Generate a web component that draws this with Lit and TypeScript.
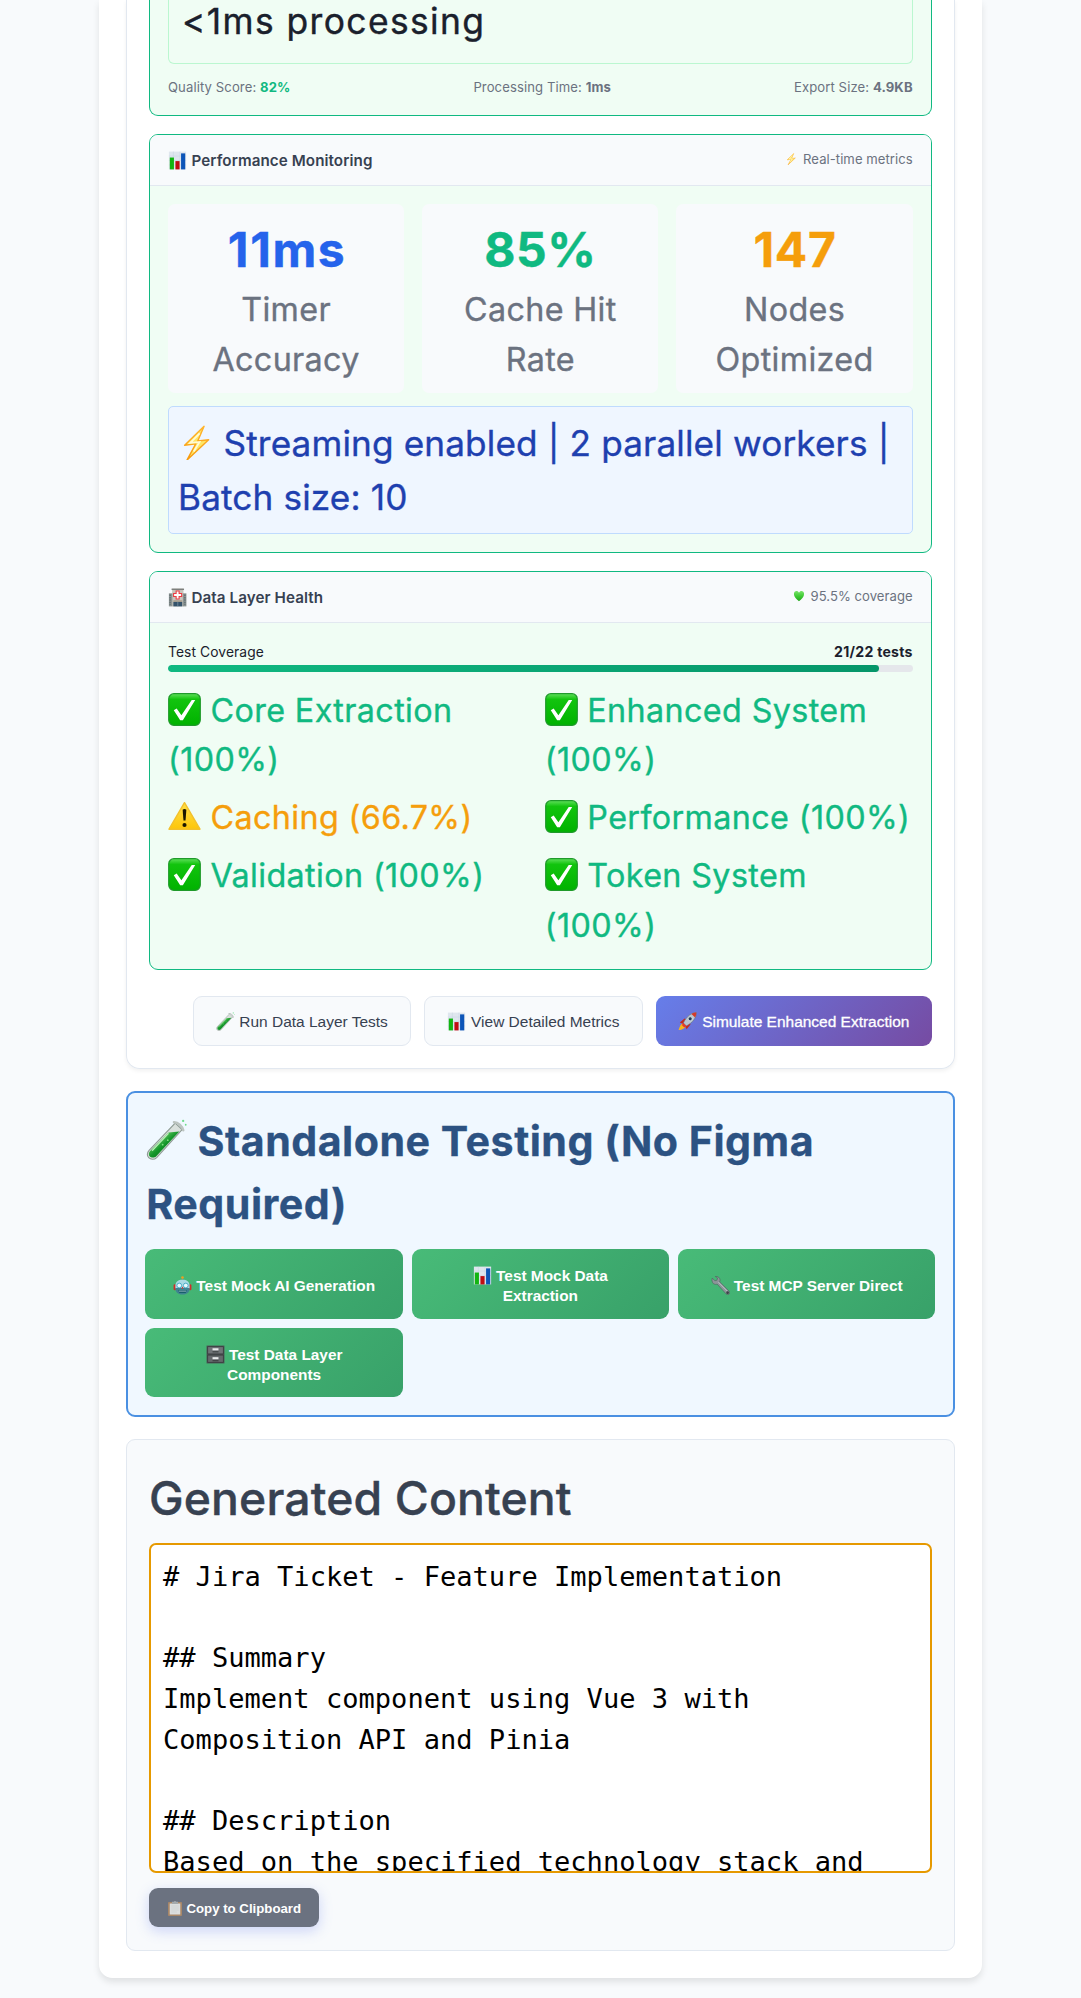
import { LitElement, html, css, svg } from "lit";
import { customElement } from "lit/decorators.js";
import { classMap } from "lit/directives/class-map.js";

const glyphs = {
  chart: svg`<rect x="1.5" y="1" width="29" height="30" fill="#dfe6ee"/>
    <path d="M1.500 8.500h29M1.500 16h29M1.500 23.500h29M9 1v30M20 1v30" stroke="#c3d3e2" stroke-width=".7"/>
    <rect x="3" y="11" width="7" height="20" fill="#12b512"/><rect x="12.500" y="17" width="7" height="14" fill="#c00d12"/>
    <rect x="22" y="4" width="7" height="27" fill="#0d55b8"/>`,
  bolt: svg`<defs><linearGradient id="bo" x1="0" y1="0" x2="0" y2="1"><stop offset="0" stop-color="#ffb52e"/><stop offset="1" stop-color="#f79a0c"/></linearGradient></defs>
    <path d="M23.500 1.200 6 18.200l10-1.200L8.200 31.500 27.600 13.300l-9.800 1.200Z" fill="#ffe766" stroke="url(#bo)" stroke-width="1.300" stroke-linejoin="round"/>
    <path d="M19.500 7.500 11 16.200l8.400-.9-5.200 8.600" fill="none" stroke="#fffbd6" stroke-width="1.600"/>`,
  hospital: svg`<rect x="7" y="1" width="19" height="30" fill="#c9c4bc"/><rect x="1.500" y="9" width="6" height="22" fill="#8b9391"/><rect x="25" y="9" width="6" height="22" fill="#8b9391"/>
    <rect x="6" y="1" width="21" height="2.400" fill="#7d7f7d"/><path d="M3.500 11v17M28.500 11v17" stroke="#55626a" stroke-width="1.800" stroke-dasharray="2.500 1.500"/>
    <path d="M13.700 5h5v4.300H23v5h-4.300v4.300h-5v-4.300H9.400v-5h4.300Z" fill="#fff" stroke="#ee3b42" stroke-width="1.800"/>
    <rect x="9" y="21" width="15" height="2" fill="#9b8e7a"/><rect x="9" y="23.500" width="15" height="7.500" fill="#35536b"/><path d="M16.500 23.500V31" stroke="#90a5b3"/>`,
  heart: svg`<defs><linearGradient id="he" x1="0" y1="0" x2="0" y2="1"><stop offset="0" stop-color="#7be36c"/><stop offset=".5" stop-color="#3fcb34"/><stop offset="1" stop-color="#22a51c"/></linearGradient></defs>
    <path d="M16 30C8 23 2.500 18 2.500 10.500 2.500 5.500 5.500 2.500 9.500 2.500c3 0 5 1.500 6.500 4.500 1.500-3 3.500-4.500 6.500-4.500 4 0 7 3 7 8C29.500 18 24 23 16 30Z" fill="url(#he)"/>`,
  check: svg`<defs><linearGradient id="ck" x1="0" y1="0" x2="0" y2="1"><stop offset="0" stop-color="#5fe05a"/><stop offset=".18" stop-color="#12c40e"/><stop offset="1" stop-color="#00b200"/></linearGradient></defs>
    <rect x=".7" y=".7" width="30.600" height="30.600" rx="5" fill="url(#ck)" stroke="#1f9a2a" stroke-width="1.200"/>
    <path d="M5.600 16.800 8.400 15l4.600 6.600L23 6.800h3.400L14.400 26.400h-2.600Z" fill="#fff"/>`,
  warning: svg`<defs><linearGradient id="wa" x1="0" y1="0" x2="0" y2="1"><stop offset="0" stop-color="#ffe04a"/><stop offset="1" stop-color="#fdc60a"/></linearGradient></defs>
    <path d="M16 2.600 31 28.300H1Z" fill="url(#wa)" stroke="#f3c12c" stroke-width="1.400" stroke-linejoin="round"/>
    <path d="M14.200 9.500q1.800-1.400 3.600 0l-.8 10.400h-2Z" fill="#1a1600"/><circle cx="16" cy="24.300" r="2" fill="#1a1600"/>`,
  tube: svg`<defs><linearGradient id="tu" x1="0" y1="0" x2="1" y2="1"><stop offset=".25" stop-color="#6fd06c"/><stop offset=".5" stop-color="#14962a"/><stop offset=".8" stop-color="#08701a"/></linearGradient></defs>
    <path d="M22.800 3.200 28.200 8.300 8.300 30.100c-2 2-4.800 1.500-6.200.1-1.400-1.400-1.400-3.900.3-5.700Z" fill="#d9e0dc" stroke="#8f9c95" stroke-width=".9"/>
    <path d="M17.600 10.600 26 9.800 8 29c-1.600 1.600-3.900 1.300-5 .3-1.100-1.100-1.100-3 .2-4.400Z" fill="url(#tu)"/>
    <path d="m17.600 11.200-12.900 13.600" stroke="#b9f0b6" stroke-width="1"/>
    <path d="M21.800 2.500c3.200-.2 6.500 3 7.300 6.300" fill="none" stroke="#bcc4c0" stroke-width="1.900" stroke-linecap="round"/>
    <circle cx="29" cy="1.500" r=".9" fill="#6fdc8b"/><circle cx="31" cy="4.500" r=".7" fill="#6fdc8b"/>
    <circle cx="17" cy="16.500" r=".7" fill="#7fe07f"/><circle cx="13" cy="20" r=".7" fill="#7fe07f"/>`,
  rocket: svg`<path d="M9.500 19.500C5 19 3.500 23 1 30.500 7 29.500 12 28 13 23.500Z" fill="#f7b51b"/><path d="M3 17.500 11 11l4 2-5 7-4-1Z" fill="#c62a1d"/><path d="M14.500 29 21 21l-2-4-7 5 1 4Z" fill="#c62a1d"/>
    <path d="M31 1C23 1 14.500 7 9 18.500l5 5C25 18 31 9.500 31 1Z" fill="#b9c6d1" stroke="#5f6f7d" stroke-width="1"/>
    <path d="M31 1c-3 0-6 .8-8.500 2.300L28.800 9.400C30.300 6.700 31 4 31 1Z" fill="#d33a2b"/><circle cx="20.500" cy="11.500" r="3.400" fill="#1f3b57" stroke="#e8eef3" stroke-width="1.200"/>
    <path d="m9 18.500 5 5-3.500 2.500-4-4Z" fill="#e8392a"/>`,
  robot: svg`<path d="M16 2v6" stroke="#7b8b92" stroke-width="1.600"/><circle cx="16" cy="2.500" r="2.200" fill="#f0a01d"/>
    <rect x="1" y="14" width="4" height="10" rx="2" fill="#cf2f2a"/><rect x="27" y="14" width="4" height="10" rx="2" fill="#cf2f2a"/>
    <path d="M4 17C4 9.500 9 6.500 16 6.500S28 9.500 28 17v4H4Z" fill="#a9dbe5"/><path d="M4 20h24c0 7-4 11-12 11S4 27 4 20Z" fill="#3f8291"/>
    <circle cx="10.500" cy="16" r="4" fill="#e9fbff" stroke="#2a9cb9" stroke-width="1.300"/><circle cx="21.500" cy="16" r="4" fill="#e9fbff" stroke="#2a9cb9" stroke-width="1.300"/>
    <path d="m16 17.500 2 3.500h-4Z" fill="#d9322b"/><path d="M9 24h14l-1.500 4h-11Z" fill="#0d5361"/><path d="M10 25.500h12" stroke="#e9fbff" stroke-width="1"/>`,
  wrench: svg`<path d="M2 3.500 6.500 8l3.700-1L11 3.300 7.200.800C11 0 15 2.500 15.300 6.700c0 1.200-.3 2.300-.7 3.100L30.500 25.500c1.600 2 1 4-.4 5.200-1.500 1-3.500.8-4.700-.6L10.300 13.600c-1 .4-2 .6-3.200.5C3 13.600.500 9 2 3.500Z" fill="#8d9599" stroke="#4d565b" stroke-width=".9"/>
    <path d="m12.500 10.500 15 15" stroke="#c3cace" stroke-width="1.400"/><circle cx="28" cy="28" r="2.300" fill="#3a4246"/>`,
  cabinet: svg`<rect x="1" y="1" width="30" height="30" fill="#4c5053"/><rect x="3" y="3" width="26" height="12" fill="#707477" stroke="#2f3234"/><rect x="3" y="17" width="26" height="12" fill="#65696c" stroke="#2f3234"/>
    <rect x="11" y="5.500" width="10" height="3.500" fill="#e9ebec"/><rect x="11" y="20.500" width="10" height="3.500" fill="#e9ebec"/><path d="M11 11.500h10M11 26.500h10" stroke="#2f3234" stroke-width="1.500"/>`,
  clipboard: svg`<rect x="2" y="3" width="28" height="28" rx="2" fill="#a88768"/><rect x="5.500" y="6" width="21" height="22" fill="#dcdedf"/><path d="M10 2.500h3.500c.5-2 4.500-2 5 0H22V7H10Z" fill="#a4a9ac"/>
    <path d="M8.500 11h15M8.500 15h15M8.500 19h15M8.500 23h11" stroke="#c6c9cb"/>`,
};
type Glyph = keyof typeof glyphs;

const icon = (name: Glyph, cls = "") =>
  html`<svg class="ico ${cls}" viewBox="0 0 32 32" aria-hidden="true">${glyphs[name]}</svg>`;

const metrics = [
  { value: "11ms", label: "Timer Accuracy", tone: "blue" },
  { value: "85%", label: "Cache Hit Rate", tone: "green" },
  { value: "147", label: "Nodes Optimized", tone: "amber" },
];

const suites = [
  { name: "Core Extraction", pct: "100%", ok: true },
  { name: "Enhanced System", pct: "100%", ok: true },
  { name: "Caching", pct: "66.7%", ok: false },
  { name: "Performance", pct: "100%", ok: true },
  { name: "Validation", pct: "100%", ok: true },
  { name: "Token System", pct: "100%", ok: true },
];

const tests: { glyph: Glyph; label: string }[] = [
  { glyph: "robot", label: "Test Mock AI Generation" },
  { glyph: "chart", label: "Test Mock Data Extraction" },
  { glyph: "wrench", label: "Test MCP Server Direct" },
  { glyph: "cabinet", label: "Test Data Layer Components" },
];

const ticket = `# Jira Ticket - Feature Implementation

## Summary
Implement component using Vue 3 with
Composition API and Pinia

## Description
Based on the specified technology stack and`;

const coverage = (21 / 22) * 100;

@customElement("app-root")
export class AppRoot extends LitElement {
  static styles = css`
    :host {
      display: block;
      box-sizing: border-box;
      height: 1998px;
      overflow: hidden;
      background: #f8fafc;
      font-family: Inter, "Liberation Sans", sans-serif;
      color: #1a202c;
    }
    * { box-sizing: border-box; margin: 0; }
    .ico { display: inline-block; width: 19px; height: 19px; vertical-align: -4px; flex: none; }
    .shell {
      width: 882.67px;
      margin-left: 99px;
      padding: 0 27px 26.700px;
      background: #fff;
      border-radius: 0 0 13.500px 13.500px;
      box-shadow: 0 4px 7px rgba(0, 0, 0, 0.1);
    }
    .card {
      padding: 0 22px 22px;
      border: 1px solid #e2e8f0;
      border-top: 0;
      border-radius: 0 0 13.500px 13.500px;
      box-shadow: 0 2px 4px rgba(0, 0, 0, 0.06);
    }
    .panel {
      border: 1px solid #10b981;
      border-radius: 9px;
      background: #f0fdf4;
      overflow: hidden;
    }
    .panel + .panel { margin-top: 17.700px; }
    .panel.cut { border-top: 0; border-radius: 0 0 9px 9px; height: 116.300px; padding: 0 18px; }
    .snippet {
      display: flex;
      align-items: flex-end;
      height: 64px;
      padding: 0 13px 21.200px;
      border: 1px solid #bbf7d0;
      border-top: 0;
      border-radius: 0 0 6px 6px;
      font-size: 35.400px;
      letter-spacing: 1.400px;
      line-height: 41px;
      white-space: nowrap;
      -webkit-text-stroke: 0.400px currentColor;
    }
    .stats { display: flex; justify-content: space-between; margin-top: 13.200px; font-size: 13.100px; line-height: 20px; letter-spacing: 0.100px; color: #6b7280; }
    .good { color: #10b981; }
    .head {
      display: flex;
      justify-content: space-between;
      align-items: center;
      height: 50.700px;
      padding: 0 18px;
      background: #f8fafc;
      border-bottom: 1px solid #e2e8f0;
    }
    .title { display: flex; align-items: center; gap: 4.500px; padding-top: 1px; font-size: 15.200px; letter-spacing: 0.080px; font-weight: 600; color: #374151; }
    .status { display: flex; align-items: center; gap: 6px; padding-bottom: 1px; font-size: 13.100px; letter-spacing: 0.040px; color: #6b7280; }
    .tiny { width: 12px; height: 12px; }
    .body { padding: 18px; }
    .tiles { display: grid; grid-template-columns: repeat(3, 1fr); gap: 18px; }
    .tile { height: 189px; padding: 11px 30px 0; background: #f8fafc; border-radius: 7px; text-align: center; }
    .value { font-size: 48px; line-height: 70px; font-weight: 700; -webkit-text-stroke: 0.400px currentColor; }
    .value.blue { color: #2563eb; letter-spacing: 1.600px; padding-left: 2px; }
    .value.green { color: #10b981; letter-spacing: 0.500px; }
    .value.amber { color: #f59e0b; letter-spacing: 0.700px; padding-left: 1px; }
    .label { font-size: 32.300px; line-height: 50px; letter-spacing: 0.350px; color: #6b7280; -webkit-text-stroke: 0.350px currentColor; }
    .stream {
      height: 128px;
      margin-top: 13.500px;
      padding: 9.200px 9px 0;
      border: 1px solid #bfdbfe;
      border-radius: 5px;
      background: #eff6ff;
      color: #1e40af;
      font-size: 35.200px;
      letter-spacing: 0.120px;
      line-height: 54px;
      -webkit-text-stroke: 0.350px currentColor;
    }
    .mid { width: 35.500px; height: 35.500px; vertical-align: -4px; }
    .coverage { display: flex; justify-content: space-between; font-size: 13.800px; line-height: 22px; letter-spacing: 0.100px; }
    .coverage b { font-size: 14.100px; letter-spacing: 0.250px; }
    .track { height: 6.800px; margin-top: 2.700px; border-radius: 3.400px; background: #e5e7eb; overflow: hidden; }
    .fill { height: 100%; border-radius: 3.400px; background: linear-gradient(90deg, #10b981, #059669); }
    .suites { display: grid; grid-template-columns: 1fr 1fr; gap: 8px 9px; margin-top: 13.500px; font-size: 32.300px; line-height: 49.800px; letter-spacing: 0.380px; }
    .suite { color: #10b981; -webkit-text-stroke: 0.350px currentColor; }
    .suite.warn { color: #f59e0b; }
    .big { width: 33px; height: 33px; }
    .ico { -webkit-text-stroke: 0; }
    .actions { display: flex; justify-content: flex-end; gap: 13.500px; margin-top: 26.400px; }
    button { margin: 0; border: 0; font-family: "Liberation Sans", Arial, sans-serif; }
    .btn {
      display: flex;
      align-items: center;
      gap: 4.800px;
      height: 49.700px;
      padding: 2px 22px 0;
      border: 1px solid #e2e8f0;
      border-radius: 9px;
      background: #f8fafc;
      color: #374151;
      font-size: 15.470px;
      white-space: nowrap;
    }
    .btn.primary { padding: 2px 22.300px 0; border: 0; background: linear-gradient(135deg, #667eea, #764ba2); color: #fff; -webkit-text-stroke: 0.300px #fff; }
    .standalone {
      margin-top: 22px;
      padding: 17.400px 17.300px 18px;
      border: 2px solid #4a90e2;
      border-radius: 9px;
      background: #f0f8ff;
    }
    h2 { padding-left: 1px; font-size: 41.200px; line-height: 63.200px; letter-spacing: 0.480px; font-weight: 700; color: #2c5282; -webkit-text-stroke: 0.300px currentColor; }
    .lead { width: 41px; height: 41px; vertical-align: -4px; }
    .grid { display: grid; grid-template-columns: repeat(3, 1fr); gap: 9px 8.700px; margin-top: 12.700px; }
    .test {
      height: 69.500px;
      padding: 5px 25px 0;
      border-radius: 9px;
      background: linear-gradient(135deg, #48bb78, #38a169);
      color: #fff;
      font-size: 15.400px;
      line-height: 20px;
      font-weight: 700;
    }
    .output { margin-top: 21.600px; height: 512.700px; padding: 23px 22px 22px; border: 1px solid #e2e8f0; border-radius: 9px; background: #f8fafc; }
    h3 { font-size: 46.300px; line-height: 70px; letter-spacing: 0.150px; font-weight: 500; color: #374151; -webkit-text-stroke: 0.400px currentColor; }
    textarea {
      display: block;
      width: 100%;
      height: 330.400px;
      margin-top: 10px;
      padding: 12px 12px 0;
      border: 2px solid #e69900;
      border-radius: 7px;
      outline: 0;
      resize: none;
      overflow: hidden;
      background: #fff;
      color: #000;
      font: 27.070px / 40.800px "DejaVu Sans Mono", monospace;
      white-space: pre;
    }
    .copy {
      display: flex;
      align-items: center;
      gap: 3.500px;
      height: 39.400px;
      margin-top: 14.600px;
      padding: 2px 18px 0;
      border-radius: 9px;
      background: #6b7280;
      box-shadow: 0 4px 13px rgba(102, 126, 234, 0.3);
      color: #fff;
      font-size: 13.230px;
      font-weight: 700;
    }
    .clip { width: 16px; height: 17px; }
  `;

  private panelHead(glyph: Glyph, title: string, statusGlyph: Glyph, status: string) {
    return html`<div class="head">
      <div class="title">${icon(glyph)}<span>${title}</span></div>
      <div class="status">${icon(statusGlyph, "tiny")}<span>${status}</span></div>
    </div>`;
  }

  render() {
    return html`
      <main class="shell">
        <section class="card">
          <div class="panel cut">
            <div class="snippet">&lt;1ms processing</div>
            <div class="stats">
              <span>Quality Score: <b class="good">82%</b></span>
              <span>Processing Time: <b>1ms</b></span>
              <span>Export Size: <b>4.9KB</b></span>
            </div>
          </div>

          <div class="panel">
            ${this.panelHead("chart", "Performance Monitoring", "bolt", "Real-time metrics")}
            <div class="body">
              <div class="tiles">
                ${metrics.map((m) => html`<div class="tile">
                  <div class="value ${m.tone}">${m.value}</div>
                  <div class="label">${m.label}</div>
                </div>`)}
              </div>
              <div class="stream">${icon("bolt", "mid")} Streaming enabled | 2 parallel workers | Batch size: 10</div>
            </div>
          </div>

          <div class="panel">
            ${this.panelHead("hospital", "Data Layer Health", "heart", "95.5% coverage")}
            <div class="body">
              <div class="coverage"><span>Test Coverage</span><b>21/22 tests</b></div>
              <div class="track"><div class="fill" style="width:${coverage}%"></div></div>
              <div class="suites">
                ${suites.map((s) => html`<div class=${classMap({ suite: true, warn: !s.ok })}>${icon(s.ok ? "check" : "warning", "big")} ${s.name} (${s.pct})</div>`)}
              </div>
            </div>
          </div>

          <div class="actions">
            <button class="btn">${icon("tube")}<span>Run Data Layer Tests</span></button>
            <button class="btn">${icon("chart")}<span>View Detailed Metrics</span></button>
            <button class="btn primary">${icon("rocket")}<span>Simulate Enhanced Extraction</span></button>
          </div>
        </section>

        <section class="standalone">
          <h2>${icon("tube", "lead")} Standalone Testing (No Figma Required)</h2>
          <div class="grid">
            ${tests.map((t) => html`<button class="test">${icon(t.glyph)} ${t.label}</button>`)}
          </div>
        </section>

        <section class="output">
          <h3>Generated Content</h3>
          <textarea readonly .value=${ticket}></textarea>
          <button class="copy">${icon("clipboard", "clip")}<span>Copy to Clipboard</span></button>
        </section>
      </main>
    `;
  }
}
